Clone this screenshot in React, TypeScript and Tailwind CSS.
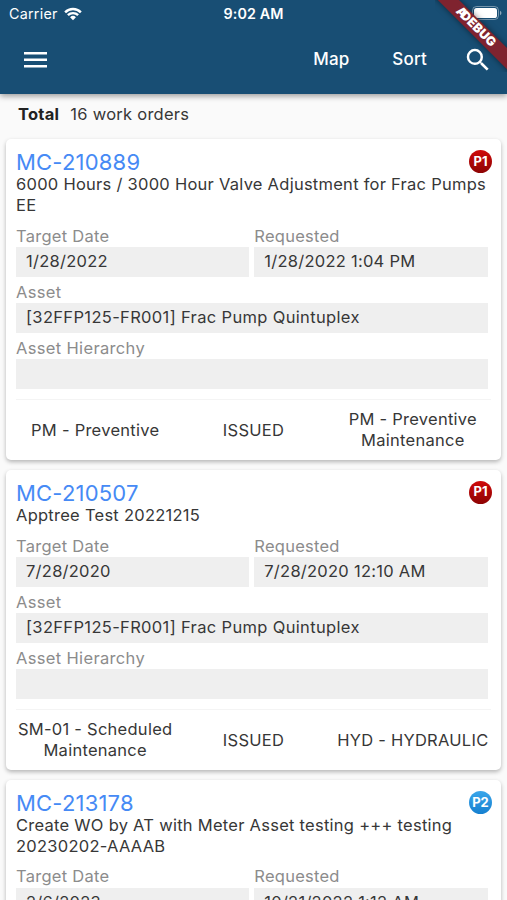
interface WorkOrder {
  id: string;
  description: string;
  priority: 'P1' | 'P2';
  targetDate: string;
  requested: string;
  asset: string;
  hierarchy: string;
  type: string;
  status: string;
  category: string;
}

const workOrders: WorkOrder[] = [
  {
    id: 'MC-210889',
    description: '6000 Hours / 3000 Hour Valve Adjustment for Frac Pumps EE',
    priority: 'P1',
    targetDate: '1/28/2022',
    requested: '1/28/2022 1:04 PM',
    asset: '[32FFP125-FR001] Frac Pump Quintuplex',
    hierarchy: '',
    type: 'PM - Preventive',
    status: 'ISSUED',
    category: 'PM - Preventive Maintenance',
  },
  {
    id: 'MC-210507',
    description: 'Apptree Test 20221215',
    priority: 'P1',
    targetDate: '7/28/2020',
    requested: '7/28/2020 12:10 AM',
    asset: '[32FFP125-FR001] Frac Pump Quintuplex',
    hierarchy: '',
    type: 'SM-01 - Scheduled Maintenance',
    status: 'ISSUED',
    category: 'HYD - HYDRAULIC',
  },
  {
    id: 'MC-213178',
    description: 'Create WO by AT with Meter Asset testing +++ testing 20230202-AAAAB',
    priority: 'P2',
    targetDate: '2/6/2023',
    requested: '10/21/2022 1:12 AM',
    asset: '',
    hierarchy: '',
    type: '',
    status: '',
    category: '',
  },
];

const badgeColors = {
  P1: 'bg-linear-to-b from-[#cf0a0a] to-[#8e0404]',
  P2: 'bg-linear-to-b from-[#3aa6ea] to-[#1580d0]',
};

function StatusBar() {
  return (
    <div className="grid grid-cols-3 items-center h-[28px] pl-[9px] pr-[6px] text-[14.3px]">
      <div className="flex items-center gap-[6px] -mt-px">
        <span>Carrier</span>
        <svg width="18" height="14" viewBox="0 0 19 14" fill="none" stroke="currentColor" strokeWidth="2.6">
          <path d="M1.2 5.2a11.8 11.8 0 0 1 16.6 0" />
          <path d="M4.1 8.3a7.7 7.7 0 0 1 10.8 0" />
          <path d="M9.5 13.6 6.4 10.4a4.5 4.5 0 0 1 6.2 0z" fill="currentColor" stroke="none" />
        </svg>
      </div>
      <span className="-ml-[3px] text-center font-semibold tracking-[0.1px] whitespace-nowrap">9:02 AM</span>
      <svg className="justify-self-end -mr-px -mt-[2px]" width="30" height="14" viewBox="0 0 30 14">
        <rect x="0.5" y="0.5" width="26" height="13" rx="4" fill="none" stroke="#fff" strokeOpacity="0.4" />
        <rect x="2" y="2" width="23" height="10" rx="2.6" fill="#fff" />
        <path d="M28 4.8c2 .8 2 3.6 0 4.4z" fill="#fff" fillOpacity="0.5" />
      </svg>
    </div>
  );
}

function DebugBanner() {
  return (
    <div className="absolute right-0 top-0 size-[72px] overflow-hidden">
      <div className="absolute left-[-17.4px] top-[22px] w-[120px] h-[14.7px] rotate-45 bg-[#7f232f] shadow-[0_0_6px_rgba(0,0,0,0.5)] flex items-center justify-center text-[12.5px] leading-none font-black text-white tracking-[0.2px]">
        <span className="relative">
          <span className="absolute right-full -mr-[4px]">A</span>
          DEBUG
        </span>
      </div>
    </div>
  );
}

function Header() {
  return (
    <header className="relative h-[94px] bg-[#184e74] text-white shadow-[0_2px_6px_rgba(0,0,0,0.4)]">
      <StatusBar />
      <div className="flex items-center h-[63px] pl-[24px] pr-[14px]">
        <svg width="23" height="16" viewBox="0 0 23 16" fill="currentColor">
          <path d="M0 0h23v2.6H0zM0 6.5h23v2.6H0zM0 12.9h23v2.6H0z" />
        </svg>
        <span className="ml-auto pt-px text-[17px] font-medium tracking-[0.1px]">Map</span>
        <span className="ml-[43px] pt-px text-[17px] font-medium tracking-[0.2px]">Sort</span>
        <svg className="ml-[36px]" width="30" height="30" viewBox="0 0 24 24" fill="currentColor">
          <path d="M15.5 14h-.79l-.28-.27A6.47 6.47 0 0 0 16 9.5 6.5 6.5 0 1 0 9.5 16c1.61 0 3.09-.59 4.23-1.57l.27.28v.79l5 4.99L20.49 19l-4.99-5zm-6 0C7.01 14 5 11.99 5 9.5S7.01 5 9.5 5 14 7.01 14 9.5 11.99 14 9.5 14z" />
        </svg>
      </div>
      <DebugBanner />
    </header>
  );
}

function Field({ label, value }: { label: string; value: string }) {
  return (
    <div className="flex-1 pb-[5px]">
      <div className="h-[21.2px] leading-[21.4px] text-[#8c8c8c]">{label}</div>
      <div className="h-[30px] bg-[#efefef] pl-[10px] leading-[29.6px] whitespace-nowrap">{value}</div>
    </div>
  );
}

function WorkOrderCard({ order }: { order: WorkOrder }) {
  return (
    <article className="rounded-[5px] bg-white px-[10px] pt-[9.4px] shadow-[0_2px_4px_rgba(0,0,0,0.28)]">
      <div className="flex items-center justify-between h-[26px]">
        <h2 className="pt-[2px] text-[22px] tracking-[0.2px] text-[#468af5]">{order.id}</h2>
        <span
          className={`-mr-px grid place-items-center size-[23px] rounded-full text-[13px] font-bold tracking-normal text-white ${badgeColors[order.priority]}`}
        >
          {order.priority}
        </span>
      </div>
      <p className="leading-[20.6px]">{order.description}</p>
      <div className="mt-[10px] mr-[3.5px] flex gap-[5px]">
        <Field label="Target Date" value={order.targetDate} />
        <Field label="Requested" value={order.requested} />
      </div>
      <div className="mr-[3.5px] tracking-[0.34px]">
        <Field label="Asset" value={order.asset} />
        <Field label="Asset Hierarchy" value={order.hierarchy} />
      </div>
      <div className="mt-[5px] grid h-[60.6px] grid-cols-3 items-center border-t border-[#f4f4f4] text-center leading-[20.6px]">
        <span>{order.type}</span>
        <span>{order.status}</span>
        <span className="-mr-[2px]">{order.category}</span>
      </div>
    </article>
  );
}

export default function App() {
  return (
    <div className="h-[900px] w-[507px] overflow-hidden bg-[#fafafa] font-['Inter',sans-serif] text-[16.5px] tracking-[0.26px] text-[#373737]">
      <Header />
      <div className="flex h-[45px] items-center gap-[11px] pl-[18px] pb-[5px]">
        <span className="font-bold text-[#222]">Total</span>
        <span>16 work orders</span>
      </div>
      <main className="flex flex-col gap-[10px] px-[6px]">
        {workOrders.map((order) => (
          <WorkOrderCard key={order.id} order={order} />
        ))}
      </main>
    </div>
  );
}
